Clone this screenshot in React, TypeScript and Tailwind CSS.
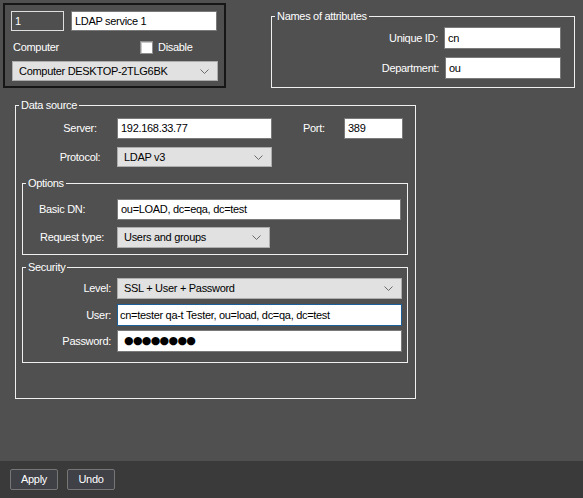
import type { ReactNode } from 'react';

function Chevron() {
  return (
    <svg width="9" height="5" viewBox="0 0 9 5" className="shrink-0" aria-hidden>
      <polyline points="0.5,0.5 4.5,4.5 8.5,0.5" fill="none" stroke="#6a6a6a" strokeWidth="1" />
    </svg>
  );
}

function TextBox({ value, className = '' }: { value: ReactNode; className?: string }) {
  return (
    <div
      className={`flex items-center border border-[#7a7a7a] bg-white px-[3px] text-black ${className}`}
    >
      {value}
    </div>
  );
}

function Combo({ value, className = '' }: { value: string; className?: string }) {
  return (
    <div
      className={`flex items-center justify-between border border-[#adadad] bg-[#e1e1e1] pl-[6px] pr-[8px] text-black ${className}`}
    >
      <span>{value}</span>
      <Chevron />
    </div>
  );
}

function GroupBox({
  title,
  className = '',
  children,
}: {
  title: string;
  className?: string;
  children: ReactNode;
}) {
  return (
    <fieldset className={`border border-[#f0f0f0] ${className}`}>
      <legend className="ml-[3px] px-[2px] leading-[14px]">{title}</legend>
      {children}
    </fieldset>
  );
}

export default function App() {
  return (
    <div className="flex h-[498px] w-[583px] flex-col bg-[#505050] font-['Liberation_Sans',Arial,sans-serif] text-[11px] tracking-[-0.3px] text-white">
      <div className="flex-1 pt-[3px]">
        <div className="flex items-start pl-[3px]">
          <div className="h-[85px] w-[223px] border-2 border-[#161616] bg-[#4f4f4f] px-[6px] pt-[6px]">
            <div className="flex gap-[7px]">
              <div className="flex h-[20px] w-[53px] items-center border border-[#dedede] px-[3px]">1</div>
              <TextBox value="LDAP service 1" className="h-[20px] w-[146px]" />
            </div>
            <div className="mt-[10px] flex h-[13px] items-center">
              <span className="w-[129px] pl-[2px]">Computer</span>
              <span className="h-[13px] w-[13px] border border-[#8f8f8f] bg-white shadow-[inset_1px_1px_0_#c8c8c8]" />
              <span className="ml-[5px]">Disable</span>
            </div>
            <Combo value="Computer DESKTOP-2TLG6BK" className="ml-[1px] mt-[7px] h-[20px] w-[206px]" />
          </div>

          <GroupBox title="Names of attributes" className="ml-[45px] mt-[6px] h-[79px] w-[304px]">
            <div className="flex flex-col items-end gap-[8px] pr-[13px] pt-[4px]">
              <div className="flex items-center">
                <span className="mr-[6px]">Unique ID:</span>
                <TextBox value="cn" className="h-[22px] w-[117px]" />
              </div>
              <div className="flex items-center">
                <span className="mr-[6px]">Department:</span>
                <TextBox value="ou" className="h-[22px] w-[116px]" />
              </div>
            </div>
          </GroupBox>
        </div>

        <GroupBox title="Data source" className="ml-[15px] mt-[10px] w-[401px] pb-[35px]">
          <div className="pt-[6px]">
            <div className="flex items-center">
              <span className="ml-[34px] w-[60px] text-center">Server:</span>
              <TextBox value="192.168.33.77" className="ml-[7px] h-[21px] w-[155px]" />
              <span className="ml-[31px] w-[41px]">Port:</span>
              <TextBox value="389" className="h-[21px] w-[59px]" />
            </div>
            <div className="mt-[8px] flex items-center">
              <span className="ml-[34px] w-[60px] text-center">Protocol:</span>
              <Combo value="LDAP v3" className="ml-[7px] h-[20px] w-[155px]" />
            </div>
          </div>

          <GroupBox title="Options" className="ml-[6px] mt-[9px] w-[386px] pb-[6px]">
            <div className="flex flex-col gap-[7px] pt-[9px]">
              <div className="flex items-center">
                <span className="ml-[16px] w-[78px]">Basic DN:</span>
                <TextBox value="ou=LOAD, dc=eqa, dc=test" className="h-[21px] w-[284px]" />
              </div>
              <div className="flex items-center">
                <span className="ml-[17px] w-[77px]">Request type:</span>
                <Combo value="Users and groups" className="h-[21px] w-[153px]" />
              </div>
            </div>
          </GroupBox>

          <GroupBox title="Security" className="ml-[6px] mt-[5px] w-[386px] pb-[10px]">
            <div className="flex flex-col pt-[4px]">
              <div className="flex items-center">
                <span className="w-[88px] text-right">Level:</span>
                <Combo value="SSL + User + Password" className="ml-[6px] h-[21px] w-[285px]" />
              </div>
              <div className="mt-[5px] flex items-center">
                <span className="w-[88px] text-right">User:</span>
                <div className="ml-[6px] flex h-[22px] w-[285px] items-center border border-[#1d5f98] bg-white px-[2px] text-black">
                  cn=tester qa-t Tester, ou=load, dc=qa, dc=test
                </div>
              </div>
              <div className="mt-[4px] flex items-center">
                <span className="w-[88px] text-right">Password:</span>
                <TextBox
                  value={
                    <span className="pl-[3px] font-['DejaVu_Sans',sans-serif] text-[11px] tracking-[-0.7px]">
                      ●●●●●●●●
                    </span>
                  }
                  className="ml-[6px] h-[22px] w-[285px]"
                />
              </div>
            </div>
          </GroupBox>
        </GroupBox>
      </div>

      <div className="flex h-[37px] items-start gap-[9px] bg-[#3a3a3a] pl-[10px] pt-[8px]">
        <button className="h-[21px] w-[48px] rounded-[2px] border border-[#767676] bg-[#404047] text-white">
          Apply
        </button>
        <button className="h-[21px] w-[48px] rounded-[2px] border border-[#767676] bg-[#404047] text-white">
          Undo
        </button>
      </div>
    </div>
  );
}
